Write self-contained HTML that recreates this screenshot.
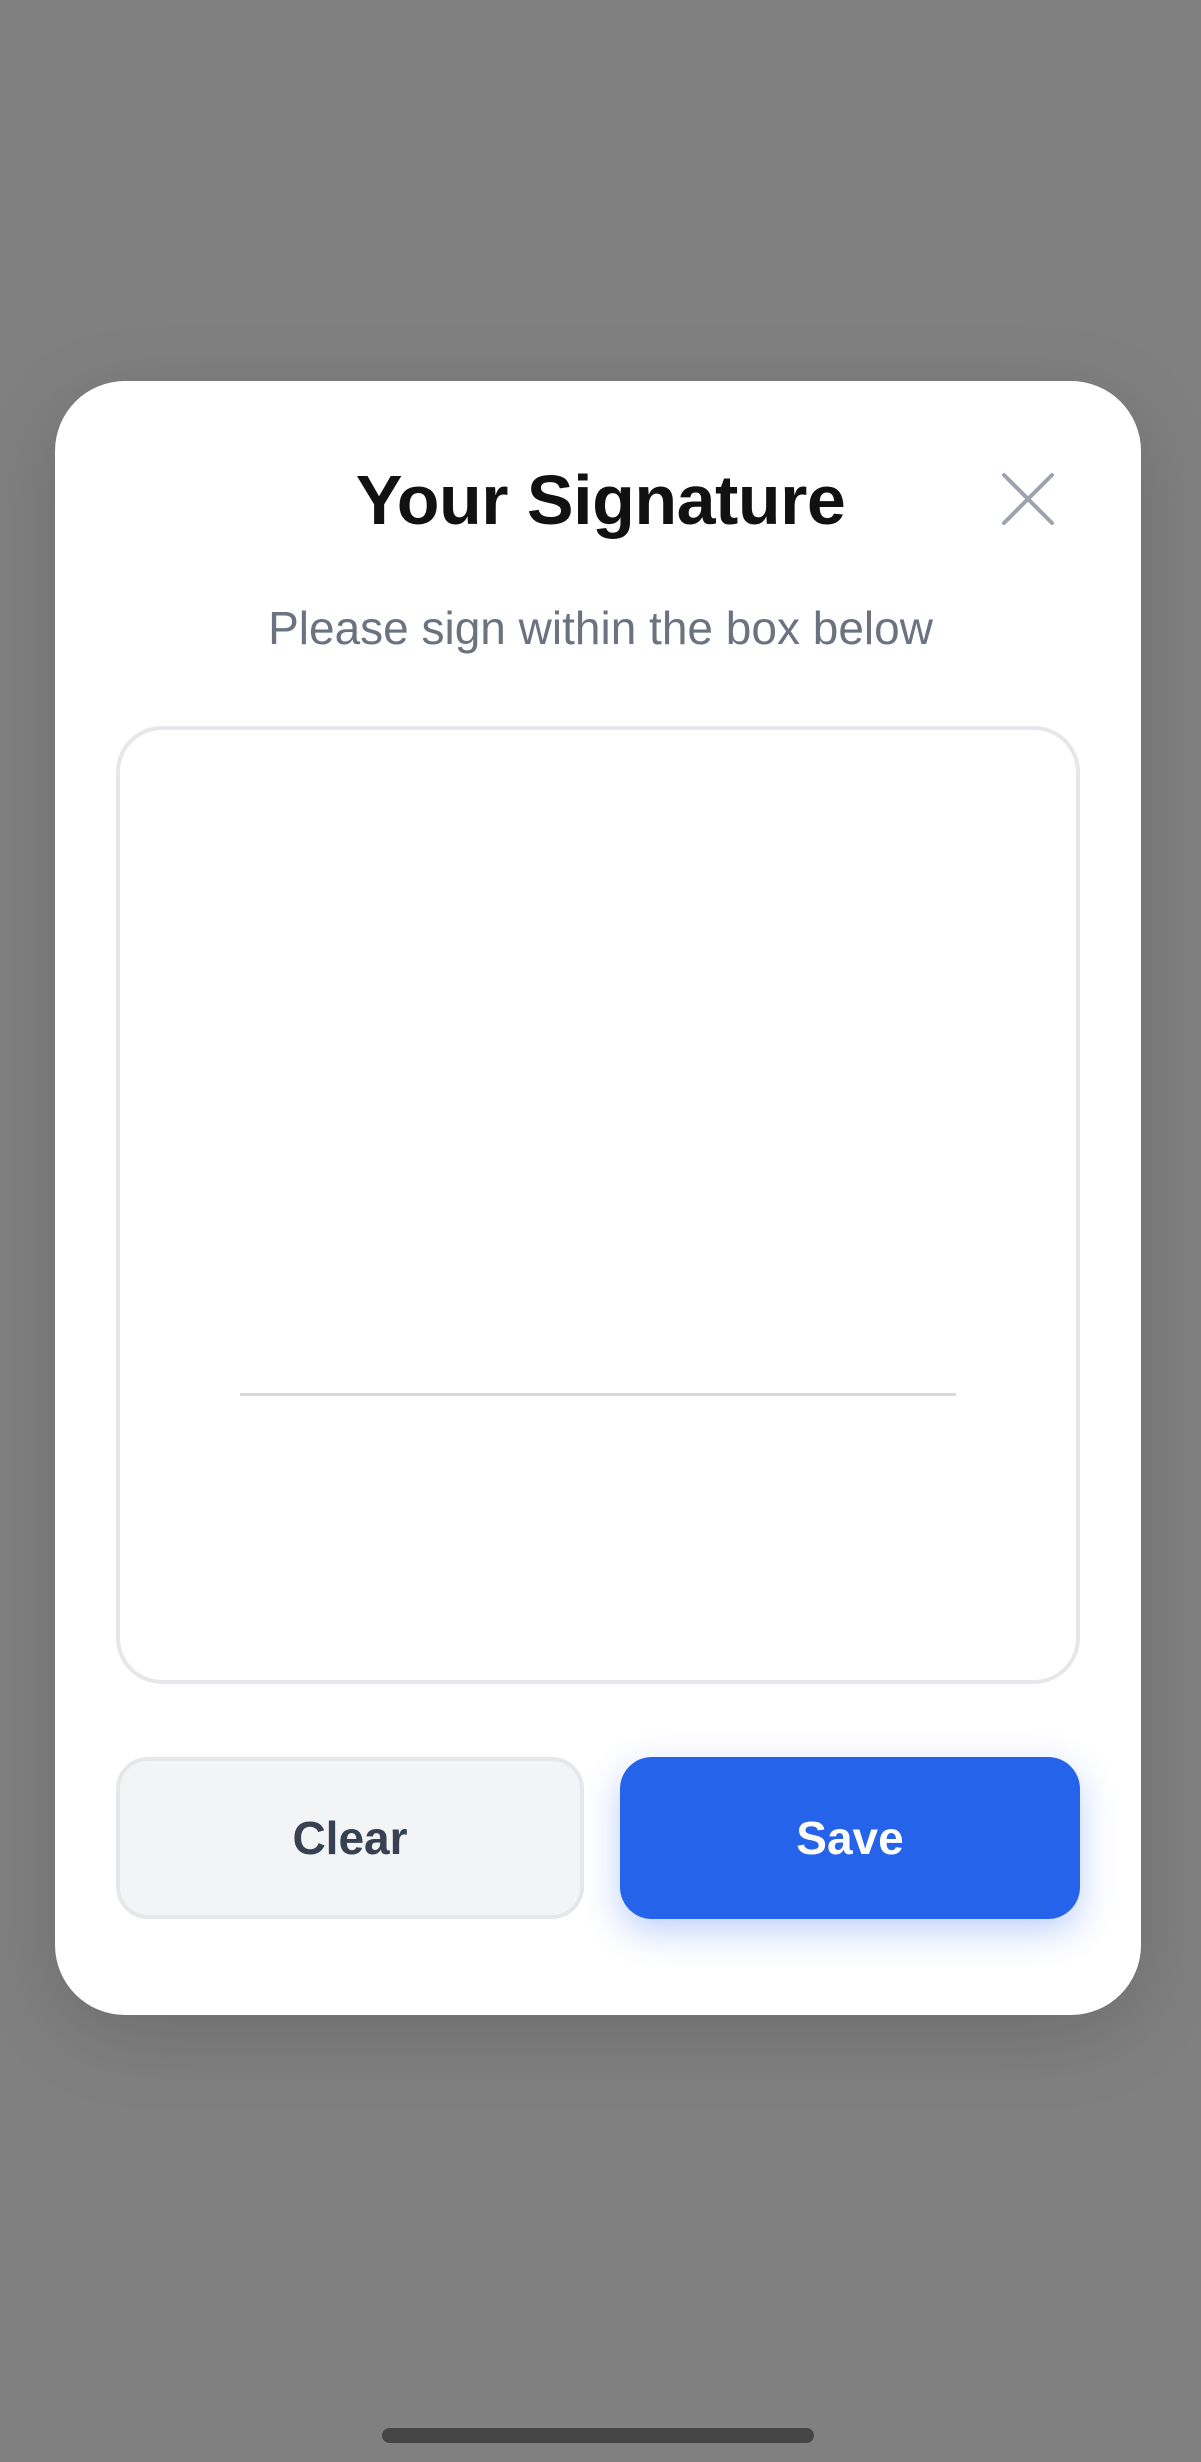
<!DOCTYPE html>
<html><head><meta charset="utf-8"><style>
html,body{margin:0;padding:0;}
body{width:1201px;height:2462px;background:#7f807f;position:relative;overflow:hidden;font-family:"Liberation Sans",sans-serif;}
.card{position:absolute;left:55px;top:381px;width:1086px;height:1634px;background:#fff;border-radius:70px;box-shadow:0 20px 80px rgba(0,0,0,0.15);}
.title{position:absolute;left:0;width:100%;top:460px;text-align:center;font-size:70px;font-weight:bold;color:#111;line-height:80px;letter-spacing:-0.5px;}
.sub{position:absolute;left:0;width:100%;top:600px;text-align:center;font-size:46px;color:#6b7280;line-height:56px;}
.close{position:absolute;left:1001px;top:472px;}
.box{position:absolute;left:116px;top:726px;width:956px;height:950px;border:4px solid #e5e7eb;border-radius:46px;background:#fff;}
.line{position:absolute;left:240px;top:1393px;width:716px;height:3px;background:#d8d9dc;}
.btn{position:absolute;top:1757px;height:162px;border-radius:32px;text-align:center;line-height:162px;font-size:46px;font-weight:bold;box-sizing:border-box;}
.clear{left:116px;width:468px;background:#f3f4f6;border:4px solid #e5e7eb;color:#374151;line-height:154px;}
.save{left:620px;width:460px;background:#2563eb;color:#fff;box-shadow:0 12px 36px rgba(37,99,235,0.3);}
.home{position:absolute;left:382px;top:2428px;width:432px;height:15px;border-radius:8px;background:#454545;}
</style></head><body>
<div class="card"></div>
<div class="title">Your Signature</div>
<svg class="close" width="54" height="54" viewBox="0 0 54 54"><path d="M3 3L51 51M51 3L3 51" stroke="#9ca3af" stroke-width="4" stroke-linecap="round"/></svg>
<div class="sub">Please sign within the box below</div>
<div class="box"></div>
<div class="line"></div>
<div class="btn clear">Clear</div>
<div class="btn save">Save</div>
<div class="home"></div>
</body></html>
